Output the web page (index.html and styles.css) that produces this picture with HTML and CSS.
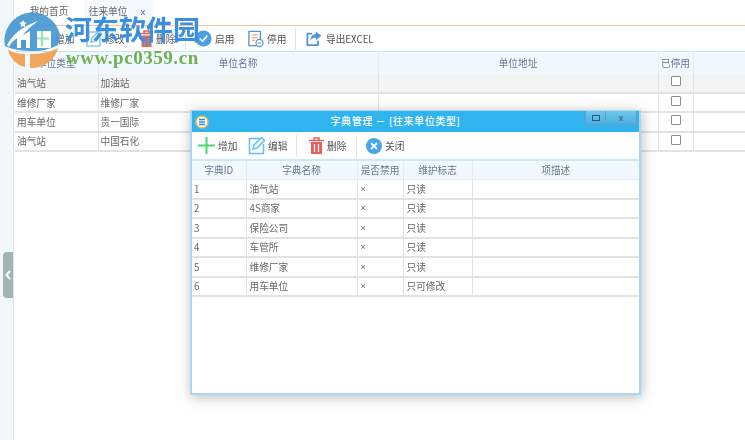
FILE: index.html
```html
<!DOCTYPE html>
<html lang="zh">
<head>
<meta charset="utf-8">
<title>往来单位</title>
<link rel="stylesheet" href="styles.css">
</head>
<body>
<div class="page">
  <aside class="side"><div class="side-handle"><svg width="6" height="10" viewBox="0 0 6 10"><path d="M5 1 1.500 5 5 9" fill="none" stroke="#fff" stroke-width="2"/></svg></div></aside>
  <main class="main">
    <nav class="tabs">
      <span class="tab">我的首页</span>
      <span class="tab tab-active">往来单位<b class="tab-x">x</b></span>
    </nav>
    <div class="toolbar main-tools">
      <span class="tool tool-add"><svg width="14" height="15" viewBox="0 0 14 15"><path d="M7 0v15M0 7.500h14" stroke="#8fe3b4" stroke-width="2"/></svg>增加</span>
      <span class="tool tool-edit"><svg width="18" height="19" viewBox="0 0 18 19"><path d="M13 3H1v14h13V7" fill="none" stroke="#8cc8ee" stroke-width="1.500"/><path d="m5 13 1-4 7-7 3 3-7 7z" fill="none" stroke="#8cc8ee" stroke-width="1.500"/></svg>修改</span>
      <span class="tool tool-del"><svg width="13" height="17" viewBox="0 0 13 17"><path d="M0 3.500h13M4 3V1h5v2" fill="none" stroke="#e2625f" stroke-width="1.600"/><path d="M1.500 5.500h10V17h-10z" fill="#e2625f"/><path d="M4.500 7.500v8M8.500 7.500v8" stroke="#5d9bd5" stroke-width="1.800"/></svg>删除</span>
      <span class="tool-sep"></span>
      <span class="tool tool-on"><svg width="17" height="17" viewBox="0 0 18 18"><circle cx="9" cy="9" r="8.500" fill="#4a9fe3"/><path d="m5 9 3 3 5-6" fill="none" stroke="#fff" stroke-width="1.800"/></svg>启用</span>
      <span class="tool tool-off"><svg width="16" height="18" viewBox="0 0 18 19"><path d="M1 1h13v16H1z" fill="#fff" stroke="#5b8fd6" stroke-width="1.500"/><path d="M4 5h7M4 8h7M4 11h4" stroke="#e59a6c" stroke-width="1.200"/><circle cx="13" cy="14" r="4" fill="#fff" stroke="#5b8fd6" stroke-width="1.300"/><path d="M11 14h4" stroke="#5b8fd6" stroke-width="1.200"/></svg>停用</span>
      <span class="tool-sep"></span>
      <span class="tool tool-export"><svg width="16" height="15" viewBox="0 0 18 17"><path d="M7 3H1.500v13h12v-5" fill="none" stroke="#4f97dc" stroke-width="2"/><path d="M11 0.500 17.500 5.500 11 10.500V7.500C8 7.500 6 9 5 11c0-4 2-7 6-7.500z" fill="#4f97dc"/></svg>导出EXCEL</span>
    </div>
    <table class="grid grid-main">
      <colgroup><col class="m1"><col class="m2"><col class="m3"><col class="m4"><col></colgroup>
      <thead><tr><th>单位类型</th><th>单位名称</th><th>单位地址</th><th>已停用</th><th></th></tr></thead>
      <tbody>
        <tr class="row-alt"><td>油气站</td><td>加油站</td><td></td><td class="c"><span class="check"></span></td><td></td></tr>
        <tr><td>维修厂家</td><td>维修厂家</td><td></td><td class="c"><span class="check"></span></td><td></td></tr>
        <tr><td>用车单位</td><td>贵一国际</td><td></td><td class="c"><span class="check"></span></td><td></td></tr>
        <tr><td>油气站</td><td>中国石化</td><td></td><td class="c"><span class="check"></span></td><td></td></tr>
      </tbody>
    </table>
  </main>

  <section class="dialog">
    <header class="dialog-title">
      <svg class="dialog-logo" width="14" height="14" viewBox="0 0 14 14"><circle cx="7" cy="7" r="6" fill="#fff" stroke="#e9b45a" stroke-width="1.600"/><path d="M4 4.500h6M4 7h6M4 9.500h6" stroke="#2f8fd6" stroke-width="1.300"/></svg>
      <span class="dialog-name">字典管理 － [往来单位类型]</span>
      <span class="win-btns"><span class="win-btn"><i class="win-max"></i></span><span class="win-btn">x</span></span>
    </header>
    <div class="toolbar dialog-tools">
      <span class="tool d-add"><svg width="17" height="17" viewBox="0 0 17 17"><path d="M8.500 0v17M0 8.500h17" stroke="#46d873" stroke-width="2"/></svg>增加</span>
      <span class="tool d-edit"><svg width="19" height="19" viewBox="0 0 19 19"><path d="M13 2.500H1.500v15h14V8" fill="none" stroke="#5fc0f2" stroke-width="1.500"/><path d="m5 13 1-4 7.500-7.500 3 3L9 12z" fill="none" stroke="#5fc0f2" stroke-width="1.500"/></svg>编辑</span>
      <span class="tool-sep"></span>
      <span class="tool d-del"><svg width="15" height="17" viewBox="0 0 15 17"><path d="M0 3.500h15M5 3V1h5v2" fill="none" stroke="#e8605c" stroke-width="1.500"/><path d="M2 5h11v12H2z" fill="#e8605c"/><path d="M5.500 7v8M9.500 7v8" stroke="#fff" stroke-width="1.200"/></svg>删除</span>
      <span class="tool-sep"></span>
      <span class="tool d-close"><svg width="16" height="16" viewBox="0 0 16 16"><circle cx="8" cy="8" r="8" fill="#45a6ee"/><path d="m5 5 6 6M11 5l-6 6" stroke="#fff" stroke-width="1.800"/></svg>关闭</span>
    </div>
    <table class="grid grid-dict">
      <colgroup><col class="d1"><col class="d2"><col class="d3"><col class="d4"><col></colgroup>
      <thead><tr><th>字典ID</th><th>字典名称</th><th>是否禁用</th><th>维护标志</th><th>项描述</th></tr></thead>
      <tbody>
        <tr><td>1</td><td>油气站</td><td class="no">×</td><td>只读</td><td></td></tr>
        <tr><td>2</td><td>4S商家</td><td class="no">×</td><td>只读</td><td></td></tr>
        <tr><td>3</td><td>保险公司</td><td class="no">×</td><td>只读</td><td></td></tr>
        <tr><td>4</td><td>车管所</td><td class="no">×</td><td>只读</td><td></td></tr>
        <tr><td>5</td><td>维修厂家</td><td class="no">×</td><td>只读</td><td></td></tr>
        <tr><td>6</td><td>用车单位</td><td class="no">×</td><td>只可修改</td><td></td></tr>
      </tbody>
    </table>
  </section>

  <div class="mark">
    <svg class="mark-logo" width="70" height="70" viewBox="0 0 70 70">
      <path fill-rule="evenodd" d="M5 46A28 28 0 0 1 60 35C60 39 59 42 58 45C50 49 42 51 34 51C24 51 13 50 5 46zM37 31h14v17H37z" fill="#4a9ad4" opacity=".95"/>
      <path d="M7 45C11 37 20 27 38 21C30 27 26 31 23 35L30 31V48H17V38C13 41 10 44 9 47z" fill="#fff"/>
      <path d="M21 40h5v8h-5z" fill="#4a9ad4"/>
      <path d="m23 20 1.200 2.300 2.600.400-1.900 1.800.500 2.600-2.400-1.200-2.400 1.200.500-2.600-1.900-1.800 2.600-.400z" fill="#fff"/>
      <path d="M8 50C14 53 20 54 25 54V67C16 65 10 58 8 50z" fill="#f0a65c"/>
      <path d="M30 54C40 54 50 52 58 48C55 59 46 67 33 68H30z" fill="#f0a65c"/>
    </svg>
    <div class="mark-cn">河东软件园</div>
    <div class="mark-url">www.pc0359.cn</div>
  </div>
</div>
</body>
</html>
```
FILE: styles.css
```css
* { box-sizing: border-box; }
html, body { margin: 0; padding: 0; background: #fff; }
body { width: 745px; height: 440px; overflow: hidden; font-family: "Noto Sans CJK SC", "Liberation Sans", sans-serif; font-size: 9.700px; color: #555; }
.page { position: relative; display: flex; width: 745px; height: 440px; overflow: hidden; filter: blur(0.5px); }
.side { position: relative; flex: 0 0 13px; background: #f0f7fd; border-right: 1px solid #dfe5ea; display: flex; align-items: center; }
.side-handle { width: 10px; height: 46px; margin: 110px 0 0 3px; background: #a2b3b5; border-radius: 4px 0 0 4px; display: flex; align-items: center; justify-content: center; }
.main { flex: 1; min-width: 0; }
.tabs { display: flex; height: 26px; border-bottom: 1px solid #f6c39b; }
.tab { width: 70px; line-height: 22px; text-align: center; color: #666; }
.tab-active { width: 69px; background: #f3f9fe; text-indent: -3px; }
.tab-x { margin-left: 13px; font-weight: 400; color: #5a5ae0; font-family: "Liberation Sans", sans-serif; }
.toolbar { display: flex; align-items: center; height: 26px; }
.main-tools { height: 25px; }
.tool { display: inline-flex; align-items: center; gap: 4px; color: #555; white-space: nowrap; }
.tool svg { flex: none; }
.tool-sep { width: 1px; height: 22px; background: #e3e6e8; }
.tool-add { margin-left: 21px; width: 51px; gap: 6px; }
.tool-edit { width: 54px; gap: 1px; }
.tool-del { width: 45px; gap: 3px; }
.tool-on { margin-left: 9px; width: 53px; gap: 3px; }
.tool-off { width: 47px; gap: 3px; }
.tool-export { margin-left: 10px; gap: 4px; }
.grid { border-collapse: collapse; table-layout: fixed; color: #666; }
.grid th { font-weight: 400; color: #6b7596; background: #f1f9fe; height: 22px; padding: 0; text-align: center; border-right: 1px solid #e1eef7; border-top: 1px solid #c5e6f6; }
.grid td { padding: 0 0 0 2px; border-bottom: 2px solid #e2e2e2; border-right: 1px solid #e3e3e3; height: 19.400px; white-space: nowrap; overflow: hidden; }
.grid th:last-child, .grid td:last-child { border-right: 0; }
.grid-main { width: 732px; margin-left: 1px; }
.m1 { width: 83px; }
.m2 { width: 280px; }
.m3 { width: 280px; }
.m4 { width: 35px; }
.row-alt td { background: #f4f4f4; }
.grid td.c { padding: 0; text-align: center; vertical-align: top; }
.check { display: inline-block; width: 10px; height: 10px; margin-top: 2px; border: 1px solid #8d8d8d; background: #fff; border-radius: 1px; }
.dialog { position: absolute; left: 190px; top: 110px; width: 451px; height: 285px; background: #fff; border: 1px solid #a9d8f0; border-width: 1px 2px 2px 2px; box-shadow: 1px 2px 12px rgba(70, 70, 70, .38); }
.dialog-title { position: relative; display: flex; align-items: center; justify-content: center; height: 21px; padding: 0 40px 2px 0; background: #2fb4f0; color: #fff; font-size: 10px; letter-spacing: .55px; font-weight: 500; }
.dialog-logo { position: absolute; left: 3px; top: 4px; }
.win-btns { position: absolute; right: 2px; top: 0; display: flex; height: 14px; letter-spacing: 0; }
.win-btn { width: 21px; height: 14px; display: flex; align-items: center; justify-content: center; font-size: 9px; color: #34557a; background: linear-gradient(#74c6ec, #48b0e2); border: 1px solid #6a9fbd; border-top: 0; font-family: "Liberation Sans", sans-serif; }
.win-btn + .win-btn { border-left: 0; width: 31px; }
.win-max { display: block; width: 8px; height: 6px; border: 1px solid #34557a; }
.dialog-tools { height: 27px; }
.d-add { margin-left: 6px; width: 50px; gap: 3px; }
.d-edit { width: 48px; gap: 1px; }
.d-del { margin-left: 12px; width: 47px; gap: 3px; }
.d-close { margin-left: 9px; gap: 3px; }
.grid-dict { width: 447px; }
.grid-dict td { height: 19.500px; padding-left: 3px; }
.grid-dict td:first-child { padding-left: 2px; }
.grid-dict td.no { font-family: "Liberation Sans", sans-serif; font-size: 9px; }
.grid-dict th { border-top: 2px solid #cbe8f7; border-bottom: 1px solid #e3edf5; height: 19px; }
.d1 { width: 54px; }
.d2 { width: 111px; }
.d3 { width: 46px; }
.d4 { width: 69px; }
.mark { position: absolute; left: 0; top: 0; width: 210px; height: 70px; }
.mark-logo { position: absolute; left: 0; top: 0; }
.mark-cn { position: absolute; left: 65px; top: 11px; width: 140px; font-size: 27px; line-height: 36px; font-weight: 700; color: #3a8fe0; white-space: nowrap; font-family: "Noto Sans CJK SC", sans-serif; }
.mark-url { position: absolute; left: 66px; top: 48px; font-family: "Liberation Serif", serif; font-weight: 700; font-size: 19px; line-height: 20px; letter-spacing: .55px; color: #6fb04f; white-space: nowrap; }
```
